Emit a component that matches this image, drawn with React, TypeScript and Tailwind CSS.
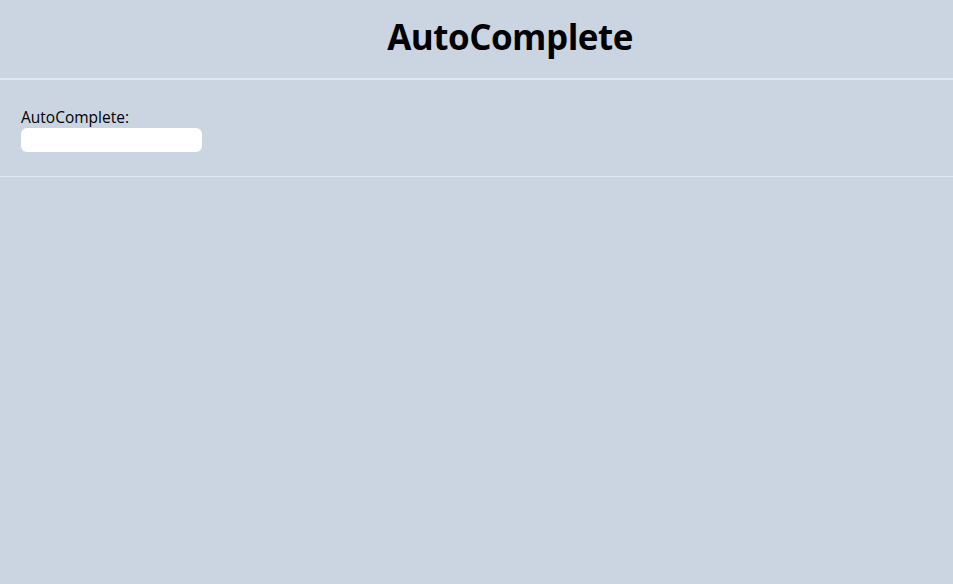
import React from 'react'

export default function App() {
  return (
    <div className="min-h-[584px] w-full bg-[#cbd5e1] text-black" style={{ fontFamily: '"Open Sans", "Noto Sans", sans-serif' }}>
      <header className="h-[80px] flex items-center justify-center pl-[67px] pb-[5px] border-b-2 border-[#e2e8f0]">
        <h1 className="text-[35px] font-bold leading-none tracking-[-0.5px]">AutoComplete</h1>
      </header>
      <section className="pt-[27px] pb-[24px] px-[21px] border-b border-[#e2e8f0]">
        <label className="block text-[15.5px] leading-[21px]">AutoComplete:</label>
        <input type="text" className="block w-[181px] h-[24px] rounded-[6px] bg-white outline-none" />
      </section>
    </div>
  )
}
